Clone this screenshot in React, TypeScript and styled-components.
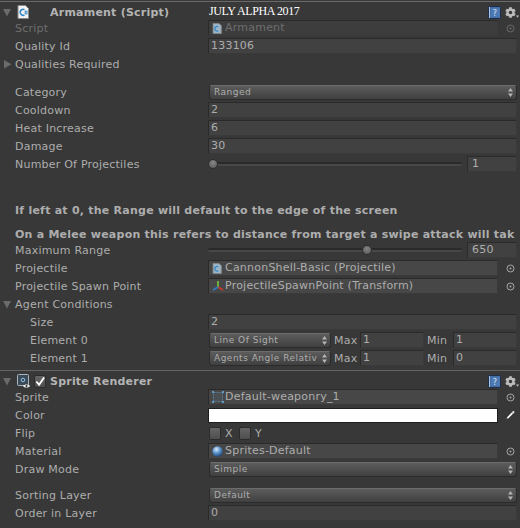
import styled, { createGlobalStyle, css } from 'styled-components'
import { FaCog } from 'react-icons/fa'

const GlobalStyle = createGlobalStyle`
  html, body {
    margin: 0;
    padding: 0;
    background: #383838;
  }
`

const ScriptIcon = ({ small = false }: { small?: boolean }) => (
  <svg width={small ? 10 : 12} height={small ? 11 : 14} viewBox="0 0 12 14">
    <path d="M1 .5h7.5L11.5 3.5v10H1z" fill={small ? '#9db4c4' : '#f2f2f2'} stroke="#8a8a8a" />
    <path d="M7.5 4.6a3 3 0 1 0 0 5.4" fill="none" stroke="#2f86c9" strokeWidth="1.6" />
    {!small && <path d="M7.5 6.6h3M7.5 8.4h3M8.4 5.5v4M9.8 5.5v4" stroke="#2f86c9" strokeWidth=".7" />}
  </svg>
)

const HelpIcon = () => (
  <svg width="13" height="13" viewBox="0 0 13 13">
    <rect x=".5" y=".5" width="12" height="12" rx="1" fill="#3d6396" stroke="#1f2f4a" />
    <rect x="2.5" y="1.5" width="9.5" height="10" fill="#4d79b3" />
    <path d="M1.5 1v11" stroke="#a9c3e4" />
    <text x="7" y="9.6" fontSize="8" fontFamily="'DejaVu Sans', sans-serif" fill="#d8e4f2" textAnchor="middle">?</text>
  </svg>
)

const GearMenu = () => (
  <GearWrap>
    <FaCog size={11} color="#bdbdbd" />
    <svg width="3" height="3" viewBox="0 0 4 3">
      <path d="M0 0h4L2 3z" fill="#bdbdbd" />
    </svg>
  </GearWrap>
)

const TargetIcon = ({ dim = false }: { dim?: boolean }) => (
  <svg width="9" height="9" viewBox="0 0 9 9">
    <circle cx="4.5" cy="4.5" r="3.5" fill="none" stroke={dim ? '#6a6a6a' : '#a8a8a8'} />
    <circle cx="4.5" cy="4.5" r="1" fill={dim ? '#6a6a6a' : '#a8a8a8'} />
  </svg>
)

const AxesIcon = () => (
  <svg width="12" height="12" viewBox="0 0 12 12">
    <path d="M6 7V1" stroke="#6fae3c" strokeWidth="2" />
    <path d="M6 7l5 3" stroke="#c9382e" strokeWidth="2" />
    <path d="M6 7l-5 3" stroke="#2f78c4" strokeWidth="2" />
  </svg>
)

const SpriteIcon = () => (
  <svg width="12" height="12" viewBox="0 0 12 12">
    <rect x="1.5" y="1.5" width="9" height="9" fill="#4a4f54" stroke="#5b7d96" strokeDasharray="2 1" />
    <rect x="0" y="0" width="2" height="2" fill="#5f9ac4" />
    <rect x="10" y="0" width="2" height="2" fill="#5f9ac4" />
    <rect x="0" y="10" width="2" height="2" fill="#5f9ac4" />
    <rect x="10" y="10" width="2" height="2" fill="#5f9ac4" />
  </svg>
)

const SphereIcon = () => (
  <svg width="11" height="11" viewBox="0 0 11 11">
    <defs>
      <radialGradient id="ball" cx="40%" cy="30%" r="70%">
        <stop offset="0" stopColor="#dbe9f7" />
        <stop offset=".5" stopColor="#5f97d0" />
        <stop offset="1" stopColor="#234a78" />
      </radialGradient>
    </defs>
    <circle cx="5.5" cy="5.5" r="5.2" fill="url(#ball)" />
  </svg>
)

const RendererIcon = () => (
  <svg width="14" height="14" viewBox="0 0 14 14">
    <rect x=".5" y=".5" width="11" height="11" rx="1" fill="#3b4a57" stroke="#aab4bd" />
    <circle cx="6" cy="6" r="1.8" fill="none" stroke="#8fc0e6" />
    <path d="M6 12c1.4-2 5.6-2 7 0-1.4 2-5.6 2-7 0z" fill="#f2f2f2" />
    <circle cx="9.5" cy="12" r="1" fill="#222" />
  </svg>
)

const Eyedropper = () => (
  <svg width="14" height="14" viewBox="0 0 14 14">
    <path d="M.5 13.5l1-3.5 7.5-7.5 2.5 2.5-7.5 7.5z" fill="#f4f4f4" stroke="#161616" strokeWidth=".7" />
    <path d="M9 2.5L11.5.5l2 2L11.500 5z" fill="#e0e0e0" />
  </svg>
)

const CheckMark = () => (
  <svg width="11" height="11" viewBox="0 0 11 11">
    <path d="M1.5 5.5l3 3.5L10 1" fill="none" stroke="#fff" strokeWidth="2" />
  </svg>
)

const PopupArrows = () => (
  <svg width="5" height="9" viewBox="0 0 5 9">
    <path d="M2.5 0L5 3.4H0zM2.5 9L0 5.6h5z" fill="#b4b4b4" />
  </svg>
)

const Triangle = ({ open = true }: { open?: boolean }) => (
  <Fold>
    <svg width="9" height="9" viewBox="0 0 9 9">
      {open ? <path d="M0 1h8L4 8.5z" fill="#6a6a6a" /> : <path d="M1 0v8.5L8.5 4.2z" fill="#6a6a6a" />}
    </svg>
  </Fold>
)

const ObjectRow = ({ label, icon, value, dim }: { label: string; icon: React.ReactNode; value: string; dim?: boolean }) => (
  <Row>
    <Label $dim={dim}>{label}</Label>
    <Control>
      <ObjectField $dim={dim}>
        <IconSlot>{icon}</IconSlot>
        {value}
      </ObjectField>
      <Picker>
        <TargetIcon dim={dim} />
      </Picker>
    </Control>
  </Row>
)

const TextRow = ({ label, value, indent }: { label: string; value: string; indent?: boolean }) => (
  <Row>
    <Label $indent={indent}>{label}</Label>
    <Control>
      <FieldBox>{value}</FieldBox>
    </Control>
  </Row>
)

const PopupRow = ({ label, value }: { label: string; value: string }) => (
  <Row>
    <Label>{label}</Label>
    <Control>
      <Popup>
        <PopupText>{value}</PopupText>
        <PopupArrows />
      </Popup>
    </Control>
  </Row>
)

const SliderRow = ({ label, value, percent }: { label: string; value: string; percent: number }) => (
  <Row>
    <Label>{label}</Label>
    <Control>
      <Track>
        <Thumb style={{ left: `${percent}%` }} />
      </Track>
      <SliderValue>{value}</SliderValue>
    </Control>
  </Row>
)

const ElementRow = ({ label, value, max, min }: { label: string; value: string; max: string; min: string }) => (
  <Row>
    <Label $indent>{label}</Label>
    <Control>
      <ElementPopup>
        <PopupText>{value}</PopupText>
        <PopupArrows />
      </ElementPopup>
      <RangeLabel>Max</RangeLabel>
      <RangeField>{max}</RangeField>
      <RangeLabel>Min</RangeLabel>
      <RangeField>{min}</RangeField>
    </Control>
  </Row>
)

const App = () => (
  <Inspector>
    <GlobalStyle />
    <TopEdge />
    <Header>
      <HeaderLeft>
        <Triangle />
        <HeaderIcon>
          <ScriptIcon />
        </HeaderIcon>
        <EnableSlot />
        <Title>Armament (Script)</Title>
      </HeaderLeft>
      <Banner>JULY ALPHA 2017</Banner>
      <HeaderTools>
        <HelpIcon />
        <GearMenu />
      </HeaderTools>
    </Header>

    <ObjectRow label="Script" icon={<ScriptIcon small />} value="Armament" dim />
    <TextRow label="Quality Id" value="133106" />
    <FoldRow>
      <Triangle open={false} />
      <FoldLabel>Qualities Required</FoldLabel>
    </FoldRow>

    <Spacer $h={10} />
    <PopupRow label="Category" value="Ranged" />
    <TextRow label="Cooldown" value="2" />
    <TextRow label="Heat Increase" value="6" />
    <TextRow label="Damage" value="30" />
    <SliderRow label="Number Of Projectiles" value="1" percent={0} />

    <Spacer $h={28} />
    <Note>If left at 0, the Range will default to the edge of the screen</Note>
    <Spacer $h={8} />
    <Note>On a Melee weapon this refers to distance from target a swipe attack will tak</Note>
    <SliderRow label="Maximum Range" value="650" percent={60.5} />
    <ObjectRow label="Projectile" icon={<ScriptIcon small />} value="CannonShell-Basic (Projectile)" />
    <ObjectRow label="Projectile Spawn Point" icon={<AxesIcon />} value="ProjectileSpawnPoint (Transform)" />
    <FoldRow>
      <Triangle />
      <FoldLabel>Agent Conditions</FoldLabel>
    </FoldRow>
    <TextRow label="Size" value="2" indent />
    <ElementRow label="Element 0" value="Line Of Sight" max="1" min="1" />
    <ElementRow label="Element 1" value="Agents Angle Relativ" max="1" min="0" />

    <Divider />
    <Header>
      <HeaderLeft>
        <Triangle />
        <HeaderIcon>
          <RendererIcon />
        </HeaderIcon>
        <EnableSlot>
          <CheckBox>
            <CheckMark />
          </CheckBox>
        </EnableSlot>
        <Title>Sprite Renderer</Title>
      </HeaderLeft>
      <span />
      <HeaderTools>
        <HelpIcon />
        <GearMenu />
      </HeaderTools>
    </Header>

    <ObjectRow label="Sprite" icon={<SpriteIcon />} value="Default-weaponry_1" />
    <Row>
      <Label>Color</Label>
      <Control>
        <Swatch />
        <Picker>
          <Eyedropper />
        </Picker>
      </Control>
    </Row>
    <Row>
      <Label>Flip</Label>
      <Control>
        <FlipGroup>
          <CheckBox />
          <FlipLabel>X</FlipLabel>
        </FlipGroup>
        <FlipGroup>
          <CheckBox />
          <FlipLabel>Y</FlipLabel>
        </FlipGroup>
      </Control>
    </Row>
    <ObjectRow label="Material" icon={<SphereIcon />} value="Sprites-Default" />
    <PopupRow label="Draw Mode" value="Simple" />
    <Spacer $h={8} />
    <PopupRow label="Sorting Layer" value="Default" />
    <TextRow label="Order in Layer" value="0" />
  </Inspector>
)

export default App

const uiText = css`
  font-family: 'DejaVu Sans', 'Liberation Sans', sans-serif;
  font-size: 11px;
  letter-spacing: 0.22px;
  color: #adadad;
  white-space: nowrap;
`

const sunken = css`
  box-sizing: border-box;
  height: 16px;
  background: #414141;
  border: 1px solid #2a2a2a;
  border-bottom-color: #3a3a3a;
  border-right-color: #3a3a3a;
  padding: 0 2px;
  line-height: 14px;
  overflow: hidden;
`

const raised = css`
  box-sizing: border-box;
  height: 15px;
  display: flex;
  align-items: center;
  justify-content: space-between;
  padding: 0 3px 0 4px;
  background: linear-gradient(#5c5c5c, #404040);
  border: 1px solid #2b2b2b;
  border-top-color: #6c6c6c;
  border-radius: 3px;
`

const Inspector = styled.div`
  ${uiText}
  width: 520px;
  height: 528px;
  overflow: hidden;
  background: #383838;
`

const TopEdge = styled.div`
  height: 1px;
  margin-top: 1px;
  background: #6a6a6a;
`

const Divider = styled.div`
  height: 1px;
  margin-top: 3px;
  background: #636363;
`

const Header = styled.div`
  display: grid;
  grid-template-columns: 209px 1fr auto;
  align-items: center;
  box-sizing: border-box;
  height: 17px;
  padding-top: 3px;
`

const HeaderLeft = styled.div`
  display: flex;
  align-items: center;
`

const Fold = styled.span`
  display: flex;
  align-items: center;
  justify-content: center;
  width: 15px;
  flex: none;
  padding-right: 1px;
  box-sizing: border-box;
`

const HeaderIcon = styled.span`
  display: flex;
  width: 17px;
  margin-left: 2px;
`

const EnableSlot = styled.span`
  display: flex;
  width: 16px;
`

const Title = styled.span`
  font-weight: bold;
  color: #b4b4b4;
`

const Banner = styled.span`
  font-family: 'Liberation Serif', serif;
  font-size: 12px;
  letter-spacing: -0.4px;
  margin-top: -2px;
  color: #fff;
`

const HeaderTools = styled.div`
  display: flex;
  align-items: center;
  gap: 4px;
  padding-right: 1px;
`

const GearWrap = styled.span`
  display: flex;
  align-items: flex-end;
`

const Row = styled.div`
  display: grid;
  grid-template-columns: 208px 1fr;
  align-items: center;
  height: 18px;
`

const Label = styled.span<{ $dim?: boolean; $indent?: boolean }>`
  padding-left: ${({ $indent }) => ($indent ? 30 : 15)}px;
  color: ${({ $dim }) => ($dim ? '#6e6e6e' : '#adadad')};
`

const Control = styled.div`
  display: flex;
  align-items: center;
  padding-right: 3px;
  min-width: 0;
`

const FieldBox = styled.div<{ $dim?: boolean }>`
  ${sunken}
  flex: 1;
  color: ${({ $dim }) => ($dim ? '#6e6e6e' : '#adadad')};
`

const ObjectField = styled(FieldBox)`
  display: flex;
  align-items: center;
  flex: none;
  width: 290px;
  padding-left: 3px;
  background: ${({ $dim }) => ($dim ? '#3d3d3d' : '#474747')};
`

const IconSlot = styled.span`
  display: flex;
  width: 12px;
  margin-right: 1px;
`

const Picker = styled.span`
  display: flex;
  justify-content: center;
  width: 9px;
  margin-left: 8px;
`

const Popup = styled.div`
  ${raised}
  flex: 1;
  margin-left: 1px;
`

const PopupText = styled.span`
  font-size: 9px;
  letter-spacing: 0.5px;
  overflow: hidden;
`

const ElementPopup = styled(Popup)`
  flex: none;
  width: 122px;
`

const RangeLabel = styled.span`
  width: 29px;
  padding-left: 3px;
  box-sizing: border-box;
  flex: none;
`

const RangeField = styled(FieldBox)``

const Track = styled.div`
  position: relative;
  width: 254px;
  height: 4px;
  margin-right: 5px;
  background: linear-gradient(#2a2a2a 50%, #484848 50%);
  border-radius: 2px;
`

const Thumb = styled.div`
  position: absolute;
  top: -3px;
  width: 10px;
  height: 10px;
  border-radius: 50%;
  background: radial-gradient(circle at 50% 35%, #858585, #555);
  border: 1px solid #2e2e2e;
  box-sizing: border-box;
`

const SliderValue = styled(FieldBox)`
  padding-left: 4px;
`

const Note = styled.div`
  height: 16px;
  line-height: 19px;
  padding-left: 15px;
  font-weight: bold;
  letter-spacing: 0.235px;
  color: #adadad;
  overflow: hidden;
`

const FoldRow = styled.div`
  display: flex;
  align-items: center;
  height: 18px;
`

const FoldLabel = styled.span`
  color: #adadad;
`

const Spacer = styled.div<{ $h: number }>`
  height: ${({ $h }) => $h}px;
`

const Swatch = styled.div`
  box-sizing: border-box;
  width: 290px;
  height: 15px;
  background: #fff;
  border: 1px solid #1e1e1e;
  flex: none;
`

const CheckBox = styled.span`
  box-sizing: border-box;
  display: flex;
  align-items: center;
  justify-content: center;
  width: 12px;
  height: 13px;
  background: linear-gradient(#656565, #4e4e4e);
  border: 1px solid #2b2b2b;
  border-radius: 2px;
`

const FlipGroup = styled.span`
  display: flex;
  align-items: center;
  width: 30px;
  &:first-child {
    margin-left: 1px;
  }
`

const FlipLabel = styled.span`
  margin-left: 4px;
`
